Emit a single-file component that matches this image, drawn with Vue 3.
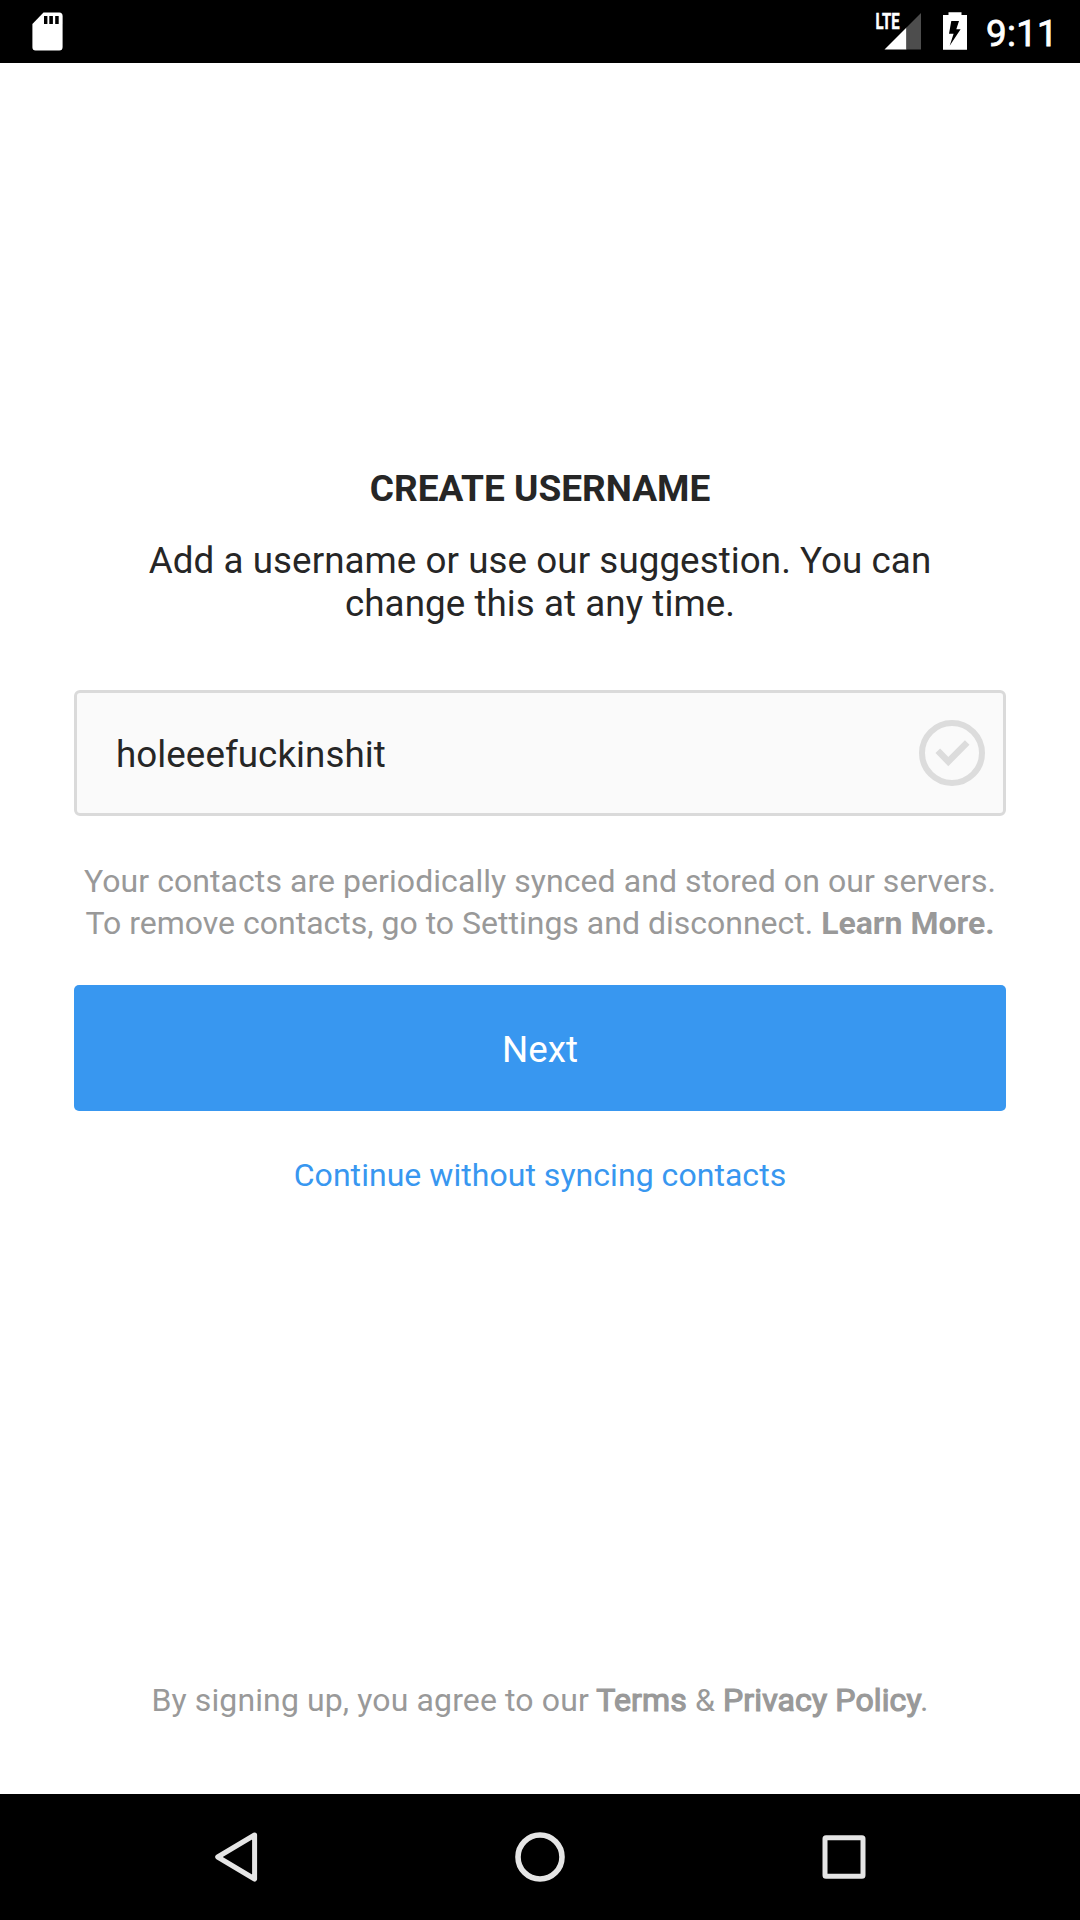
<script setup>
import { ref } from 'vue'

const username = ref('holeeefuckinshit')
</script>

<template>
  <div class="screen">
    <header class="status">
      <svg class="sd" width="31" height="39" viewBox="0 0 31 39">
        <path d="M11.5 0.5H27.3Q30.6 0.5 30.6 4V35Q30.6 38.5 27.3 38.5H3.5Q0.4 38.5 0.4 35V12Z" fill="#fff" />
        <path d="M12 4h3.4v8H12zM17.3 4h3.6v8h-3.6zM23.2 4h3.5v8h-3.5z" fill="#000" />
      </svg>
      <div class="status-right">
        <svg class="signal" width="46" height="46" viewBox="0 -8 46 46">
          <path d="M9.5 37.5L31.5 15.5V37.5Z" fill="#fff" />
          <path d="M31.5 15.5L46 1V37.5H31.5Z" fill="#4d4d4d" />
          <text class="lte" x="0.6" y="17" textLength="24" lengthAdjust="spacingAndGlyphs">LTE</text>
        </svg>
        <svg class="battery" width="24" height="38" viewBox="0 0 24 38">
          <path d="M5.5 0.3H18.5V3H24V37.7H0V3H5.5Z" fill="#fff" />
          <path d="M8.3 9H16L13.3 17.3H17.6L6.7 33.7L10.6 21.7H6Z" fill="#000" />
        </svg>
        <span class="clock">9:11</span>
      </div>
    </header>

    <main class="content">
      <h1 class="title">CREATE USERNAME</h1>
      <p class="desc">Add a username or use our suggestion. You can<br />change this at any time.</p>
      <div class="field">
        <span class="value">{{ username }}</span>
        <svg width="66" height="66" viewBox="0 0 66 66" fill="none" stroke="#dcdcdc">
          <circle cx="33" cy="33" r="30" stroke-width="6" />
          <path d="M18.8 30.8L29.3 41.6L48.2 22.4" stroke-width="6.4" />
        </svg>
      </div>
      <p class="note">Your contacts are periodically synced and stored on our servers.<br /><span class="tight">To remove contacts, go to Settings and disconnect. <b>Learn More.</b></span></p>
      <button class="next" type="button">Next</button>
      <a class="skip">Continue without syncing contacts</a>
      <p class="legal">By signing up, you agree to our <span class="strong">Terms</span> &amp; <span class="strong">Privacy Policy</span>.</p>
    </main>

    <nav class="nav">
      <svg width="44" height="52" viewBox="0 0 44 52">
        <path d="M40.6 4L3.7 26L40.6 48Z" fill="none" stroke="#e5e5e5" stroke-width="5" stroke-linejoin="round" />
      </svg>
      <svg width="50" height="50" viewBox="0 0 50 50">
        <circle cx="25" cy="25" r="22" fill="none" stroke="#e5e5e5" stroke-width="5.6" />
      </svg>
      <svg width="44" height="44" viewBox="0 0 44 44">
        <rect x="3" y="2.7" width="38" height="38.5" rx="1" fill="none" stroke="#e5e5e5" stroke-width="5" stroke-linejoin="round" />
      </svg>
    </nav>
  </div>
</template>

<style>
body {
  margin: 0;
}
</style>

<style scoped>
.screen {
  display: flex;
  flex-direction: column;
  width: 1080px;
  height: 1920px;
  background: #fff;
  font-family: Roboto, sans-serif;
  font-size: 36.75px;
  line-height: 43px;
  letter-spacing: 0.06px;
  color: #262626;
}
.status {
  display: flex;
  justify-content: space-between;
  height: 63px;
  padding: 12px 25px 0 32px;
  box-sizing: border-box;
  background: #000;
}
.status svg {
  flex: none;
}
.status-right {
  display: flex;
}
.signal {
  margin-top: -8px;
}
.lte {
  font-size: 22.5px;
  font-weight: 700;
  letter-spacing: 0;
  fill: #fff;
  stroke: #fff;
  stroke-width: 0.5px;
}
.battery {
  margin-left: 22px;
}
.clock {
  margin-left: 19px;
  width: 69px;
  color: #fff;
  letter-spacing: 0.3px;
  -webkit-text-stroke: 0.8px #fff;
  white-space: nowrap;
}
.content {
  flex: 1;
  display: flex;
  flex-direction: column;
  padding: 404px 74px 0;
  text-align: center;
}
.title {
  margin: 0;
  font-size: 37px;
  font-weight: 700;
  letter-spacing: 0;
}
.desc {
  margin: 29px 0 0;
}
.field {
  display: flex;
  align-items: center;
  justify-content: space-between;
  height: 126px;
  box-sizing: border-box;
  margin-top: 65px;
  padding: 0 18px 0 39px;
  border: 3px solid #dadada;
  border-radius: 6px;
  background: #fafafa;
}
.value {
  padding-top: 3px;
}
.note {
  margin: 44px 0 0;
  font-size: 32px;
  line-height: 42px;
  color: #999;
  white-space: nowrap;
}
.tight {
  letter-spacing: 0;
}
.next {
  height: 126px;
  margin: 41px 0 0;
  padding: 3px 0 0;
  border: 0;
  border-radius: 5px;
  background: #3897f0;
  color: #fff;
  font: inherit;
}
.skip {
  margin-top: 46px;
  font-size: 32px;
  line-height: 37px;
  letter-spacing: 0.04px;
  color: #3897f0;
}
.legal {
  margin: 488px 0 0;
  font-size: 32px;
  line-height: 37px;
  letter-spacing: 0.12px;
  color: #999;
}
.strong {
  -webkit-text-stroke: 1.2px #999;
}
.nav {
  display: flex;
  align-items: center;
  justify-content: space-between;
  height: 126px;
  padding: 0 214px;
  box-sizing: border-box;
  background: #000;
}
</style>
